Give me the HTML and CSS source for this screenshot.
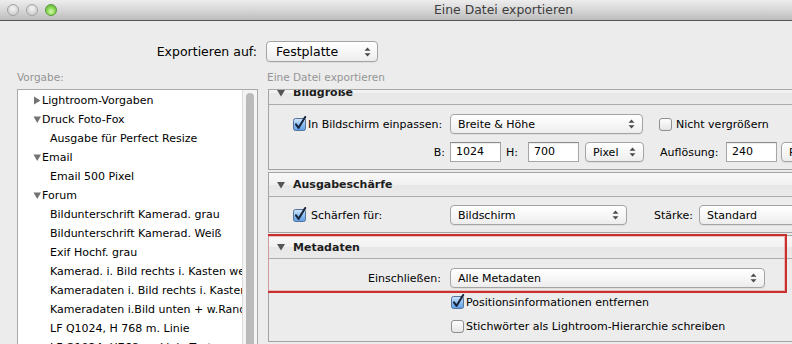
FILE: index.html
```html
<!DOCTYPE html>
<html lang="de">
<head>
<meta charset="utf-8">
<title>Eine Datei exportieren</title>
<link rel="stylesheet" href="styles.css">
</head>
<body>
<div class="titlebar">
  <div class="lights">
    <span class="light"></span>
    <span class="light"></span>
    <span class="light green"></span>
  </div>
  <div class="title">Eine Datei exportieren</div>
</div>

<div class="toprow">
  <div class="toplabel">Exportieren auf:</div>
  <div class="popup popup-top">
    <span>Festplatte</span>
    <svg class="arrows" width="7" height="10" viewBox="0 0 7 10"><path d="M3.5 0.5 L6.5 3.8 H0.5 Z M3.5 9.5 L6.5 6.2 H0.5 Z" fill="#4a4a4a"/></svg>
  </div>
</div>

<div class="labelrow">
  <div class="lbl lbl-left">Vorgabe:</div>
  <div class="lbl lbl-right">Eine Datei exportieren</div>
</div>

<div class="columns">
  <div class="list">
    <div class="list-items">
      <div class="row top"><svg class="tri" width="8" height="9" viewBox="0 0 8 9"><path d="M1 0.5 L7.5 4.5 L1 8.5 Z" fill="#737373"/></svg><span>Lightroom-Vorgaben</span></div>
      <div class="row top"><svg class="tri" width="8" height="9" viewBox="0 0 8 9"><path d="M0.5 1.5 H8 L4.25 8 Z" fill="#737373"/></svg><span>Druck Foto-Fox</span></div>
      <div class="row child">Ausgabe für Perfect Resize</div>
      <div class="row top"><svg class="tri" width="8" height="9" viewBox="0 0 8 9"><path d="M0.5 1.5 H8 L4.25 8 Z" fill="#737373"/></svg><span>Email</span></div>
      <div class="row child">Email 500 Pixel</div>
      <div class="row top"><svg class="tri" width="8" height="9" viewBox="0 0 8 9"><path d="M0.5 1.5 H8 L4.25 8 Z" fill="#737373"/></svg><span>Forum</span></div>
      <div class="row child">Bildunterschrift Kamerad. grau</div>
      <div class="row child">Bildunterschrift Kamerad. Weiß</div>
      <div class="row child">Exif Hochf. grau</div>
      <div class="row child">Kamerad. i. Bild rechts i. Kasten weiß</div>
      <div class="row child">Kameradaten i. Bild rechts i. Kasten schwarz</div>
      <div class="row child">Kameradaten i.Bild unten + w.Rand</div>
      <div class="row child">LF Q1024, H 768 m. Linie</div>
      <div class="row child">LF Q1024, H768 m. Linie Text</div>
    </div>
    <div class="scroll"><div class="thumb"></div></div>
  </div>

  <div class="panel">
    <div class="section sec-first">
      <div class="sec-head">
        <svg class="htri" width="8" height="8" viewBox="0 0 8 8"><path d="M0 1 H8 L4 7.5 Z" fill="#555"/></svg>
        <span class="htext">Bildgröße</span>
      </div>
      <div class="sec-body body1">
        <div class="crow">
          <div class="cell first">
            <svg class="cb" width="13" height="13" viewBox="0 0 13 13"><defs><linearGradient id="cbg1" x1="0" y1="0" x2="0" y2="1"><stop offset="0" stop-color="#d4e7fb"/><stop offset="0.5" stop-color="#8fbff0"/><stop offset="1" stop-color="#5d9ee6"/></linearGradient></defs><rect x="0.5" y="0.5" width="12" height="12" rx="2" fill="url(#cbg1)" stroke="#53739b"/><path d="M3 6.3 L5.6 9.8 L12.2 -1" fill="none" stroke="#17243d" stroke-width="2.1" stroke-linecap="round" stroke-linejoin="round"/></svg>
            <span class="cbtext">In Bildschirm einpassen:</span>
          </div>
          <div class="popup w193"><span>Breite &amp; Höhe</span><svg class="arrows" width="7" height="10" viewBox="0 0 7 10"><path d="M3.5 0.5 L6.5 3.8 H0.5 Z M3.5 9.5 L6.5 6.2 H0.5 Z" fill="#4a4a4a"/></svg></div>
          <div class="nv">
            <svg class="cb" width="13" height="13" viewBox="0 0 13 13"><defs><linearGradient id="cbu1" x1="0" y1="0" x2="0" y2="1"><stop offset="0" stop-color="#ffffff"/><stop offset="1" stop-color="#e4e4e4"/></linearGradient></defs><rect x="0.5" y="0.5" width="12" height="12" rx="2.5" fill="url(#cbu1)" stroke="#8f8f8f"/></svg>
            <span class="cbtext">Nicht vergrößern</span>
          </div>
        </div>
        <div class="crow">
          <div class="cell first right pr4">B:</div>
          <div class="field w51">1024</div>
          <div class="cell hcell">H:</div>
          <div class="field w51">700</div>
          <div class="popup w59 ml6"><span>Pixel</span><svg class="arrows" width="7" height="10" viewBox="0 0 7 10"><path d="M3.5 0.5 L6.5 3.8 H0.5 Z M3.5 9.5 L6.5 6.2 H0.5 Z" fill="#4a4a4a"/></svg></div>
          <div class="cell aufl">Auflösung:</div>
          <div class="field w51">240</div>
          <div class="popup w90 ml4"><span>Pixel pro Zoll</span></div>
        </div>
      </div>
    </div>

    <div class="section">
      <div class="sec-head">
        <svg class="htri" width="8" height="8" viewBox="0 0 8 8"><path d="M0 1 H8 L4 7.5 Z" fill="#555"/></svg>
        <span class="htext">Ausgabeschärfe</span>
      </div>
      <div class="sec-body body2">
        <div class="crow">
          <div class="cell first">
            <svg class="cb" width="13" height="13" viewBox="0 0 13 13"><defs><linearGradient id="cbg2" x1="0" y1="0" x2="0" y2="1"><stop offset="0" stop-color="#d4e7fb"/><stop offset="0.5" stop-color="#8fbff0"/><stop offset="1" stop-color="#5d9ee6"/></linearGradient></defs><rect x="0.5" y="0.5" width="12" height="12" rx="2" fill="url(#cbg2)" stroke="#53739b"/><path d="M3 6.3 L5.6 9.8 L12.2 -1" fill="none" stroke="#17243d" stroke-width="2.1" stroke-linecap="round" stroke-linejoin="round"/></svg>
            <span class="cbtext sch">Schärfen für:</span>
          </div>
          <div class="popup w177"><span>Bildschirm</span><svg class="arrows" width="7" height="10" viewBox="0 0 7 10"><path d="M3.5 0.5 L6.5 3.8 H0.5 Z M3.5 9.5 L6.5 6.2 H0.5 Z" fill="#4a4a4a"/></svg></div>
          <div class="cell staerke">Stärke:</div>
          <div class="popup w140"><span>Standard</span></div>
        </div>
      </div>
    </div>

    <div class="section sec-meta">
      <div class="sec-head head-meta">
        <svg class="htri" width="8" height="8" viewBox="0 0 8 8"><path d="M0 1 H8 L4 7.5 Z" fill="#555"/></svg>
        <span class="htext">Metadaten</span>
      </div>
      <div class="sec-body body3">
        <div class="crow">
          <div class="cell first right pr9">Einschließen:</div>
          <div class="popup w315"><span>Alle Metadaten</span><svg class="arrows" width="7" height="10" viewBox="0 0 7 10"><path d="M3.5 0.5 L6.5 3.8 H0.5 Z M3.5 9.5 L6.5 6.2 H0.5 Z" fill="#4a4a4a"/></svg></div>
        </div>
        <div class="crow sub">
          <svg class="cb" width="13" height="13" viewBox="0 0 13 13"><defs><linearGradient id="cbg3" x1="0" y1="0" x2="0" y2="1"><stop offset="0" stop-color="#d4e7fb"/><stop offset="0.5" stop-color="#8fbff0"/><stop offset="1" stop-color="#5d9ee6"/></linearGradient></defs><rect x="0.5" y="0.5" width="12" height="12" rx="2" fill="url(#cbg3)" stroke="#53739b"/><path d="M3 6.3 L5.6 9.8 L12.2 -1" fill="none" stroke="#17243d" stroke-width="2.1" stroke-linecap="round" stroke-linejoin="round"/></svg>
          <span class="cbtext">Positionsinformationen entfernen</span>
        </div>
        <div class="crow sub">
          <svg class="cb" width="13" height="13" viewBox="0 0 13 13"><defs><linearGradient id="cbu2" x1="0" y1="0" x2="0" y2="1"><stop offset="0" stop-color="#ffffff"/><stop offset="1" stop-color="#e4e4e4"/></linearGradient></defs><rect x="0.5" y="0.5" width="12" height="12" rx="2.5" fill="url(#cbu2)" stroke="#8f8f8f"/></svg>
          <span class="cbtext">Stichwörter als Lightroom-Hierarchie schreiben</span>
        </div>
      </div>
      <div class="highlight"></div>
    </div>
  </div>
</div>
</body>
</html>
```

FILE: styles.css
```css
html, body {
  margin: 0;
  padding: 0;
  overflow: hidden;
}
body {
  width: 792px;
  height: 344px;
  background: #ececec;
  font-family: "DejaVu Sans", sans-serif;
  font-size: 11px;
  color: #000;
}

/* title bar */
.titlebar {
  height: 20px;
  border-bottom: 1px solid #555;
  background: linear-gradient(#ededed, #d9d9d9 45%, #bdbdbd);
  display: flex;
  align-items: center;
}
.lights {
  display: flex;
  gap: 7px;
  padding-left: 7px;
}
.light {
  width: 10px;
  height: 10px;
  border-radius: 50%;
  border: 1px solid #a2a2a2;
  background: radial-gradient(circle at 50% 35%, #f5f5f5, #d6d6d6 60%, #c4c4c4);
}
.light.green {
  border-color: #5b9a3c;
  background: radial-gradient(circle at 50% 65%, #d9f9b5, #8fdc5a 45%, #4ea72a);
}
.title {
  margin-left: 377px;
  font-size: 12.4px;
  color: #3d3d3d;
  line-height: 20px;
}

/* export target row */
.toprow {
  display: flex;
  align-items: center;
  margin-top: 20px;
  height: 21px;
}
.toplabel {
  width: 257px;
  text-align: right;
  font-size: 12.5px;
}
.popup {
  box-sizing: border-box;
  height: 20px;
  border: 1px solid #a4a4a4;
  border-radius: 4px;
  background: linear-gradient(#ffffff, #f7f7f7 50%, #ededed);
  box-shadow: 0 1px 0 rgba(0, 0, 0, 0.06);
  display: flex;
  align-items: center;
  justify-content: space-between;
  padding: 0 7px 0 7px;
  white-space: nowrap;
  overflow: hidden;
  flex: none;
}
.popup-top {
  margin-left: 9px;
  width: 112px;
  height: 21px;
  font-size: 12.5px;
  padding-left: 9px;
  padding-right: 6px;
}
.arrows {
  flex: none;
}

/* labels */
.labelrow {
  display: flex;
  margin-top: 8px;
  line-height: 14px;
  height: 14px;
}
.lbl {
  font-size: 10.5px;
  color: #959595;
}
.lbl-left {
  margin-left: 17px;
  width: 241px;
}
.lbl-right {
  margin-left: 9px;
}

/* columns */
.columns {
  display: flex;
  align-items: flex-start;
  margin-top: 5px;
}

/* preset list */
.list {
  margin-left: 17px;
  width: 241px;
  height: 270px;
  box-sizing: border-box;
  border: 1px solid #a9a9a9;
  background: #fff;
  display: flex;
  flex: none;
}
.list-items {
  flex: 1;
  min-width: 0;
  overflow: hidden;
  padding-top: 1px;
}
.row {
  height: 19px;
  line-height: 19px;
  white-space: nowrap;
  overflow: hidden;
}
.row.top {
  display: flex;
  align-items: center;
  padding-left: 15px;
}
.tri {
  flex: none;
  margin-right: 1px;
}
.row.child {
  padding-left: 32px;
}
.scroll {
  width: 15px;
  flex: none;
  background: #f4f4f4;
  border-left: 1px solid #dcdcdc;
  box-sizing: border-box;
}
.thumb {
  margin: 3px 0 0 3px;
  width: 8px;
  height: 320px;
  border-radius: 4px;
  background: #bababa;
}

/* right panel */
.panel {
  margin-left: 10px;
  width: 560px;
  height: 260px;
  flex: none;
  border-top: 1px solid #a8a8a8;
  overflow: hidden;
}
.section {
  border: 1px solid #a3a3a3;
  margin-bottom: 2px;
  background: #ececec;
  position: relative;
}
.sec-first {
  margin-top: -10px;
}
.sec-head {
  height: 23px;
  border-bottom: 1px solid #ababab;
  background: linear-gradient(#f8f8f8, #f1f1f1 50%, #e7e7e7 50%, #eaeaea);
  display: flex;
  align-items: center;
  padding-left: 8px;
}
.head-meta {
  height: 22px;
}
.htri {
  flex: none;
  margin-right: 8px;
}
.htext {
  font-weight: bold;
  font-size: 11px;
  color: #1e1e1e;
}
.sec-body {
  padding-left: 24px;
  display: flex;
  flex-direction: column;
}
.body1 {
  padding-top: 9px;
  padding-bottom: 7px;
  gap: 8px;
}
.body2 {
  padding-top: 8px;
  padding-bottom: 7px;
}
.body3 {
  padding-top: 9px;
  padding-bottom: 5px;
  gap: 4px;
}
.crow {
  display: flex;
  align-items: center;
  height: 20px;
  white-space: nowrap;
}
.cell {
  flex: none;
  display: flex;
  align-items: center;
}
.first {
  width: 157px;
  box-sizing: border-box;
}
.right {
  justify-content: flex-end;
}
.pr4 {
  padding-right: 5px;
}
.pr9 {
  padding-right: 9px;
}
.cb {
  flex: none;
  overflow: visible;
}
.cbtext {
  margin-left: 2px;
}
.sch {
  margin-left: 5px;
}
.nv {
  display: flex;
  align-items: center;
  margin-left: 16px;
}
.nv .cbtext {
  margin-left: 4px;
}
.field {
  box-sizing: border-box;
  height: 20px;
  background: #fff;
  border: 1px solid #a6a6a6;
  border-top-color: #8c8c8c;
  box-shadow: inset 0 1px 1px rgba(0, 0, 0, 0.08);
  padding-left: 5px;
  line-height: 18px;
  flex: none;
}
.w51 { width: 51px; }
.w59 { width: 59px; }
.w90 { width: 90px; }
.w140 { width: 140px; }
.w177 { width: 177px; }
.w193 { width: 193px; }
.w315 { width: 315px; }
.ml4 { margin-left: 4px; }
.ml6 { margin-left: 6px; }
.hcell {
  width: 27px;
  box-sizing: border-box;
  padding-left: 5px;
}
.aufl {
  width: 66px;
  margin-left: 16px;
}
.staerke {
  width: 45px;
  margin-left: 27px;
}
.sub {
  padding-left: 158px;
}

/* red annotation frame */
.highlight {
  position: absolute;
  left: -3px;
  top: -2px;
  width: 521px;
  height: 59px;
  box-sizing: border-box;
  border: 2px solid #c8302d;
  box-shadow: inset 0 0 0 1px rgba(232, 150, 150, 0.6);
  pointer-events: none;
}
```
